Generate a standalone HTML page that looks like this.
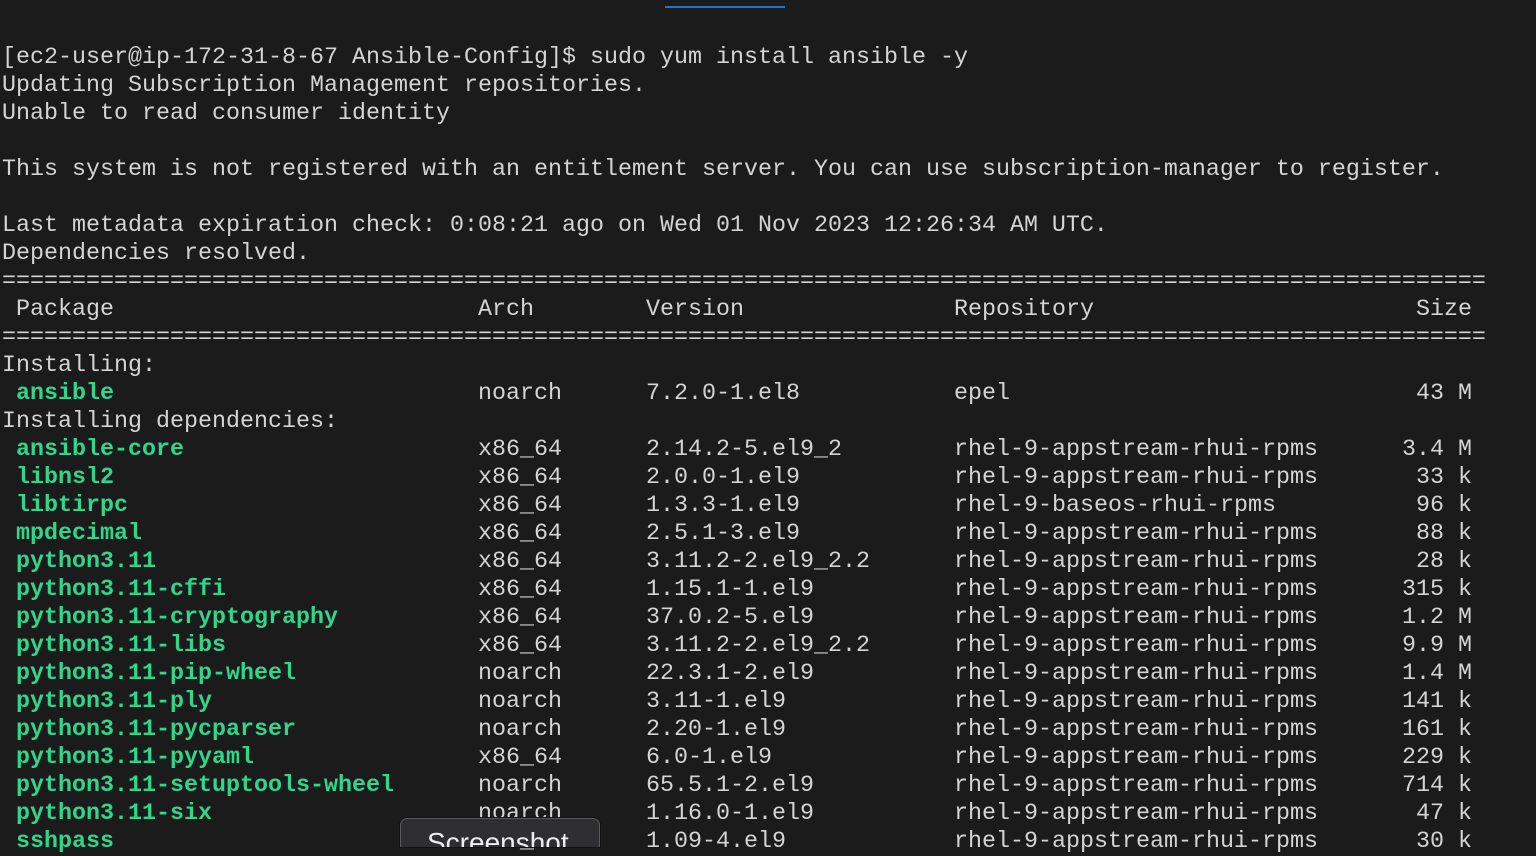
<!DOCTYPE html>
<html><head><meta charset="utf-8"><style>
html,body{margin:0;padding:0;background:#1b1b1b;width:1536px;height:846px;overflow:hidden;}
#t{position:absolute;left:2px;top:44px;font-family:"Liberation Mono","DejaVu Sans Mono",monospace;font-size:23.33px;color:#d4d4d4;}
.r{position:relative;height:28px;line-height:28px;white-space:pre;width:1530px;}
.r span{position:absolute;top:0;}
.p{left:14px;color:#2fd68c;font-weight:bold;}
.a{left:476px}.v{left:644px}.g{left:952px}.s{right:60px}
.blue{position:absolute;left:665px;top:6px;width:120px;height:2px;background:#1f74c9;}
.tip{position:absolute;left:400px;top:818px;width:198px;height:28px;overflow:hidden;background:#2f2e30;border:1px solid #5a5a5a;border-bottom:none;border-radius:7px 7px 0 0;box-shadow:0 0 0 1px #111;font-family:"Liberation Sans",sans-serif;font-size:28px;color:#eee;}
.tip div{position:absolute;left:26px;top:8px;line-height:32px;}
</style></head><body>
<div class="blue"></div>
<div id="t">
<div class="r">[ec2-user@ip-172-31-8-67 Ansible-Config]$ sudo yum install ansible -y</div>
<div class="r">Updating Subscription Management repositories.</div>
<div class="r">Unable to read consumer identity</div>
<div class="r"> </div>
<div class="r">This system is not registered with an entitlement server. You can use subscription-manager to register.</div>
<div class="r"> </div>
<div class="r">Last metadata expiration check: 0:08:21 ago on Wed 01 Nov 2023 12:26:34 AM UTC.</div>
<div class="r">Dependencies resolved.</div>
<div class="r">==========================================================================================================</div>
<div class="r"><span style="left:14px">Package</span><span class="a">Arch</span><span class="v">Version</span><span class="g">Repository</span><span class="s">Size</span></div>
<div class="r">==========================================================================================================</div>
<div class="r">Installing:</div>
<div class="r"><span class="p">ansible</span><span class="a">noarch</span><span class="v">7.2.0-1.el8</span><span class="g">epel</span><span class="s">43 M</span></div>
<div class="r">Installing dependencies:</div>
<div class="r"><span class="p">ansible-core</span><span class="a">x86_64</span><span class="v">2.14.2-5.el9_2</span><span class="g">rhel-9-appstream-rhui-rpms</span><span class="s">3.4 M</span></div>
<div class="r"><span class="p">libnsl2</span><span class="a">x86_64</span><span class="v">2.0.0-1.el9</span><span class="g">rhel-9-appstream-rhui-rpms</span><span class="s">33 k</span></div>
<div class="r"><span class="p">libtirpc</span><span class="a">x86_64</span><span class="v">1.3.3-1.el9</span><span class="g">rhel-9-baseos-rhui-rpms</span><span class="s">96 k</span></div>
<div class="r"><span class="p">mpdecimal</span><span class="a">x86_64</span><span class="v">2.5.1-3.el9</span><span class="g">rhel-9-appstream-rhui-rpms</span><span class="s">88 k</span></div>
<div class="r"><span class="p">python3.11</span><span class="a">x86_64</span><span class="v">3.11.2-2.el9_2.2</span><span class="g">rhel-9-appstream-rhui-rpms</span><span class="s">28 k</span></div>
<div class="r"><span class="p">python3.11-cffi</span><span class="a">x86_64</span><span class="v">1.15.1-1.el9</span><span class="g">rhel-9-appstream-rhui-rpms</span><span class="s">315 k</span></div>
<div class="r"><span class="p">python3.11-cryptography</span><span class="a">x86_64</span><span class="v">37.0.2-5.el9</span><span class="g">rhel-9-appstream-rhui-rpms</span><span class="s">1.2 M</span></div>
<div class="r"><span class="p">python3.11-libs</span><span class="a">x86_64</span><span class="v">3.11.2-2.el9_2.2</span><span class="g">rhel-9-appstream-rhui-rpms</span><span class="s">9.9 M</span></div>
<div class="r"><span class="p">python3.11-pip-wheel</span><span class="a">noarch</span><span class="v">22.3.1-2.el9</span><span class="g">rhel-9-appstream-rhui-rpms</span><span class="s">1.4 M</span></div>
<div class="r"><span class="p">python3.11-ply</span><span class="a">noarch</span><span class="v">3.11-1.el9</span><span class="g">rhel-9-appstream-rhui-rpms</span><span class="s">141 k</span></div>
<div class="r"><span class="p">python3.11-pycparser</span><span class="a">noarch</span><span class="v">2.20-1.el9</span><span class="g">rhel-9-appstream-rhui-rpms</span><span class="s">161 k</span></div>
<div class="r"><span class="p">python3.11-pyyaml</span><span class="a">x86_64</span><span class="v">6.0-1.el9</span><span class="g">rhel-9-appstream-rhui-rpms</span><span class="s">229 k</span></div>
<div class="r"><span class="p">python3.11-setuptools-wheel</span><span class="a">noarch</span><span class="v">65.5.1-2.el9</span><span class="g">rhel-9-appstream-rhui-rpms</span><span class="s">714 k</span></div>
<div class="r"><span class="p">python3.11-six</span><span class="a">noarch</span><span class="v">1.16.0-1.el9</span><span class="g">rhel-9-appstream-rhui-rpms</span><span class="s">47 k</span></div>
<div class="r"><span class="p">sshpass</span><span class="a">x86_64</span><span class="v">1.09-4.el9</span><span class="g">rhel-9-appstream-rhui-rpms</span><span class="s">30 k</span></div>
</div>
<div class="tip"><div>Screenshot</div></div>
</body></html>
